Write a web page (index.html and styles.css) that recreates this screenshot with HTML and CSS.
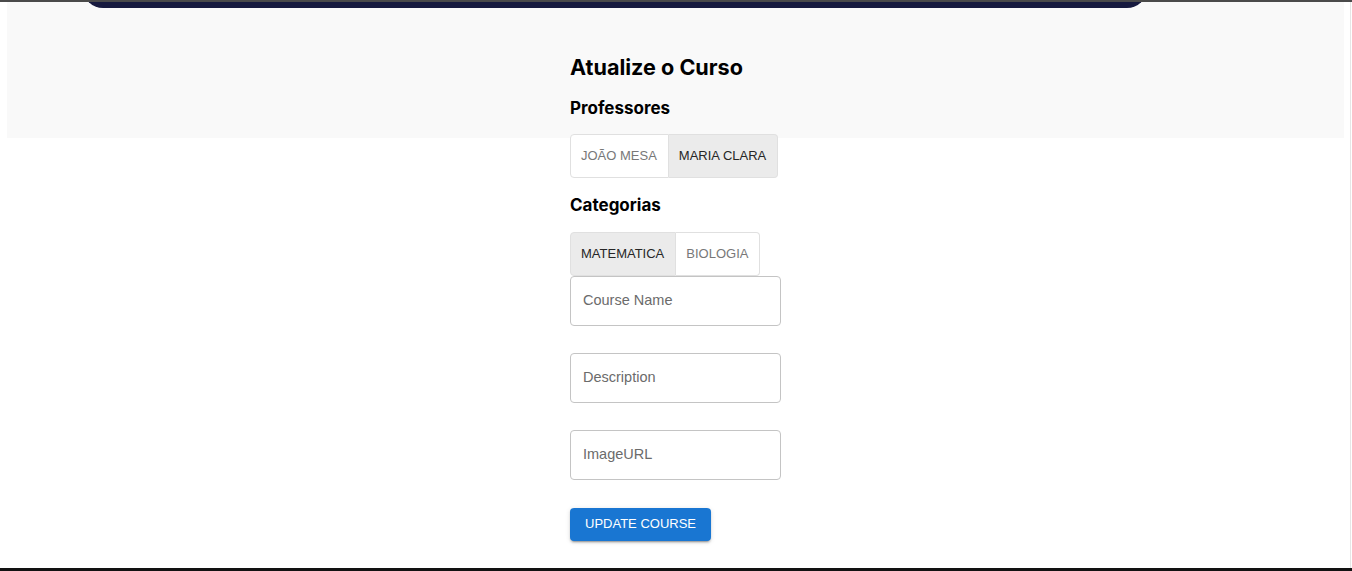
FILE: index.html
```html
<!DOCTYPE html>
<html lang="pt">
<head>
<meta charset="utf-8">
<title>Atualize o Curso</title>
<link rel="stylesheet" href="styles.css">
</head>
<body>
<div class="topline"></div>
<div class="window">
  <main class="page">
    <div class="navwrap"><div class="nav"></div></div>
    <form class="form">
      <h1 class="title">Atualize o Curso</h1>
      <h2 class="subtitle">Professores</h2>
      <div class="toggle-group">
        <button type="button" class="toggle">JOÃO MESA</button>
        <button type="button" class="toggle selected">MARIA CLARA</button>
      </div>
      <h2 class="subtitle subtitle-last">Categorias</h2>
      <div class="toggle-group">
        <button type="button" class="toggle selected">MATEMATICA</button>
        <button type="button" class="toggle">BIOLOGIA</button>
      </div>
      <div class="fields">
        <input class="field" type="text" placeholder="Course Name">
        <input class="field" type="text" placeholder="Description">
        <input class="field" type="text" placeholder="ImageURL">
      </div>
      <button type="button" class="submit">UPDATE COURSE</button>
    </form>
  </main>
  <div class="edge"></div>
</div>
<div class="bottomline"></div>
</body>
</html>
```
FILE: styles.css
```css
html, body {
  margin: 0;
  padding: 0;
  background: #ffffff;
  height: 571px;
  overflow: hidden;
}

.topline {
  height: 2px;
  background: #4a4a4a;
}

.window {
  display: flex;
  height: 566px;
}

.page {
  flex: 1;
  margin-left: 7px;
  margin-right: 6px;
  background: linear-gradient(to bottom, #f9f9f9 0, #f9f9f9 136px, #ffffff 136px);
}

.edge {
  width: 1px;
  margin-right: 1px;
  background: #e6e6e6;
}

.bottomline {
  height: 3px;
  background: #121212;
}

.navwrap {
  height: 6px;
  overflow: hidden;
  display: flex;
  align-items: flex-end;
  padding: 0 197px 0 76px;
}

.nav {
  flex: 1;
  height: 40px;
  flex-shrink: 0;
  border-radius: 20px;
  background: #171a3f;
}

.form {
  display: flex;
  flex-direction: column;
  align-items: flex-start;
  width: 211px;
  margin-left: 563px;
  padding-top: 45px;
}

.title {
  margin: 0;
  font-family: Inter, "Liberation Sans", sans-serif;
  font-size: 21.6px;
  line-height: 28px;
  font-weight: 700;
  color: #000;
}

.subtitle {
  margin: 15px 0 14px;
  font-family: Inter, "Liberation Sans", sans-serif;
  font-size: 17px;
  line-height: 24px;
  font-weight: 700;
  color: #000;
}

.subtitle-last {
  margin-bottom: 15px;
}

.toggle-group {
  display: flex;
  border-radius: 4px;
}

.toggle {
  font-family: "Liberation Sans", Arial, sans-serif;
  font-size: 13px;
  line-height: 20px;
  padding: 11px 11px 11px 10px;
  border: 1px solid #e0e0e0;
  background: #ffffff;
  color: #787878;
  cursor: pointer;
  margin: 0;
}

.toggle + .toggle {
  border-left: none;
}

.toggle:first-child {
  border-radius: 4px 0 0 4px;
}

.toggle:last-child {
  border-radius: 0 4px 4px 0;
}

.toggle.selected {
  background: #ebebeb;
  color: #262626;
}

.fields {
  display: flex;
  flex-direction: column;
  gap: 27px;
  width: 100%;
}

.field {
  box-sizing: border-box;
  width: 211px;
  height: 50px;
  margin: 0;
  padding: 0 12px 2px;
  border: 1px solid #c4c4c4;
  border-radius: 4px;
  font-family: "Liberation Sans", Arial, sans-serif;
  font-size: 14.5px;
  color: #222;
  background: #fff;
}

.field::placeholder {
  color: #6b6b6b;
  opacity: 1;
}

.submit {
  margin-top: 28px;
  height: 33px;
  padding: 0 15px 2px;
  border: none;
  border-radius: 4px;
  background: #1976d2;
  color: #ffffff;
  font-family: "Liberation Sans", Arial, sans-serif;
  font-size: 13px;
  box-shadow: 0 3px 1px -2px rgba(0,0,0,0.2), 0 2px 2px 0 rgba(0,0,0,0.14), 0 1px 5px 0 rgba(0,0,0,0.12);
  cursor: pointer;
}
```
